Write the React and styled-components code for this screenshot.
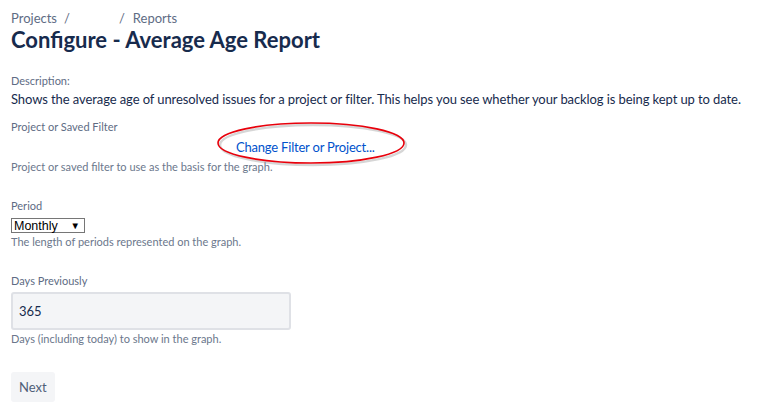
import React from 'react';
import styled, { createGlobalStyle } from 'styled-components';

const GlobalStyle = createGlobalStyle`
    body {
        margin: 0;
        background: #fff;
        font-family: Lato, "Liberation Sans", sans-serif;
        color: #172b4d;
    }
`;

function App() {
    return (
        <Page>
            <GlobalStyle />
            <Breadcrumbs>
                <Crumb>Projects</Crumb>
                <Slash>/</Slash>
                <Gap />
                <Slash>/</Slash>
                <Crumb>Reports</Crumb>
            </Breadcrumbs>
            <Title>Configure - Average Age Report</Title>

            <Field top={20}>
                <Label>Description:</Label>
                <Body>Shows the average age of unresolved issues for a project or filter. This helps you see whether your backlog is being kept up to date.</Body>
            </Field>

            <Field top={10}>
                <Label>Project or Saved Filter</Label>
                <LinkRow>
                    <ChangeLink href="#">Change Filter or Project...</ChangeLink>
                    <Ellipse width="194" height="46" viewBox="0 0 194 46">
                        <ellipse cx="96" cy="24" rx="93" ry="20" fill="none" stroke="#999" strokeOpacity="0.4" strokeWidth="2.5" />
                        <ellipse cx="94" cy="22" rx="93" ry="20" fill="none" stroke="#e8000b" strokeWidth="1.6" />
                    </Ellipse>
                </LinkRow>
                <Help>Project or saved filter to use as the basis for the graph.</Help>
            </Field>

            <Field top={23}>
                <Label>Period</Label>
                <Select>
                    <span>Monthly</span>
                    <Arrow>▼</Arrow>
                </Select>
                <Help>The length of periods represented on the graph.</Help>
            </Field>

            <Field top={23}>
                <Label>Days Previously</Label>
                <TextInput defaultValue="365" />
                <Help>Days (including today) to show in the graph.</Help>
            </Field>

            <Button>Next</Button>
        </Page>
    );
}

export default App;


const Page = styled.div`
    padding: 9px 11px;
    display: flex;
    flex-direction: column;
    align-items: flex-start;
`;

const Breadcrumbs = styled.div`
    display: flex;
    align-items: center;
    font-size: 13px;
    line-height: 18px;
    color: #5e6c84;
`;

const Crumb = styled.span``;

const Slash = styled.span`
    margin: 0 8px 0 7px;
`;

const Gap = styled.span`
    width: 34px;
`;

const Title = styled.h1`
    margin: 0;
    font-size: 22px;
    line-height: 26px;
    font-weight: 700;
    color: #172b4d;
`;

const Field = styled.div`
    margin-top: ${p => p.top}px;
    display: flex;
    flex-direction: column;
    align-items: flex-start;
`;

const Label = styled.div`
    font-size: 11px;
    line-height: 16px;
    color: #5e6c84;
`;

const Body = styled.div`
    font-size: 13px;
    letter-spacing: -0.09px;
    line-height: 20px;
    white-space: nowrap;
    color: #172b4d;
`;

const LinkRow = styled.div`
    position: relative;
    margin: 1px 0 0 225px;
    height: 22px;
    display: flex;
    align-items: center;
`;

const ChangeLink = styled.a`
    font-size: 13px;
    letter-spacing: -0.2px;
    color: #0052cc;
    text-decoration: none;
`;

const Ellipse = styled.svg`
    position: absolute;
    left: -19px;
    top: -15px;
`;

const Help = styled.div`
    font-size: 11px;
    line-height: 16px;
    color: #6b778c;
    margin-top: 1px;
`;

const Select = styled.div`
    display: flex;
    align-items: center;
    justify-content: space-between;
    width: 66px;
    height: 13px;
    padding: 0 4px 0 2px;
    margin-top: 4px;
    border: 1px solid #767676;
    font-family: "Liberation Sans", Arial, sans-serif;
    font-size: 12.5px;
    color: #000;
`;

const Arrow = styled.span`
    font-size: 9.5px;
`;

const TextInput = styled.input`
    box-sizing: border-box;
    width: 280px;
    height: 38px;
    margin-top: 3px;
    padding: 0 6px;
    border: 2px solid #dfe1e6;
    border-radius: 3px;
    background: #f4f5f7;
    font-family: inherit;
    font-size: 13px;
    color: #172b4d;
    outline: none;
`;

const Button = styled.button`
    margin-top: 25px;
    height: 30px;
    padding: 0 8px;
    border: none;
    border-radius: 3px;
    background: #f4f5f7;
    font-family: inherit;
    font-size: 13px;
    color: #505f79;
`;
